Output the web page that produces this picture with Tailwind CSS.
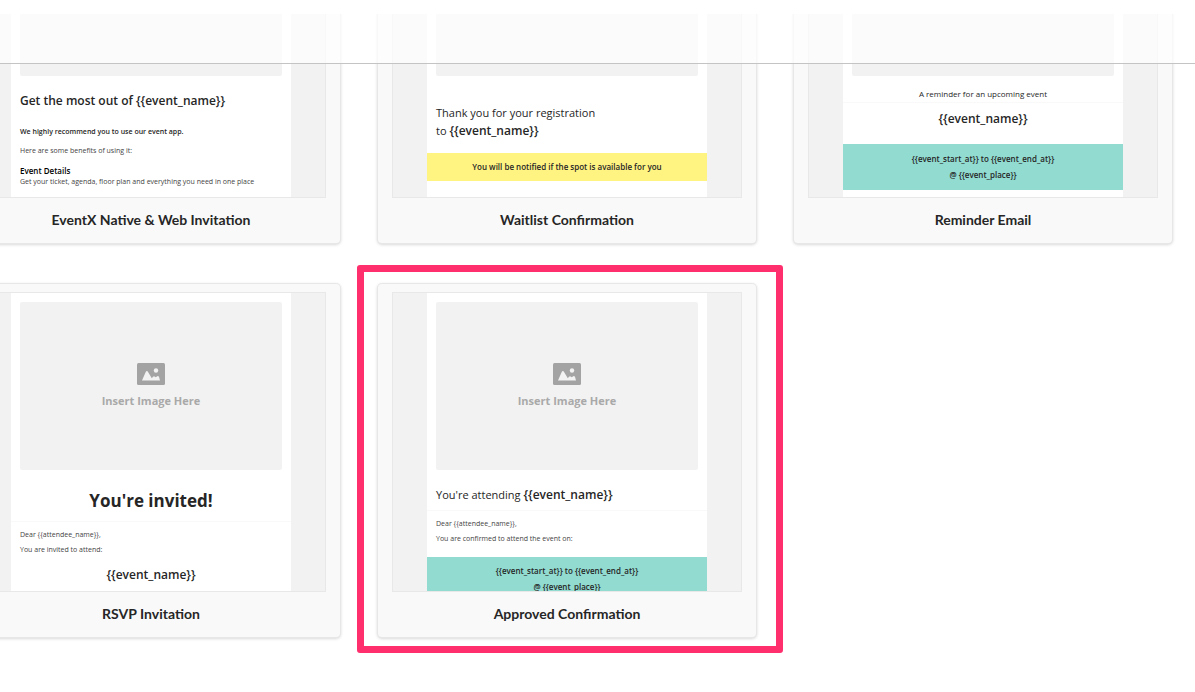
<!DOCTYPE html>
<html lang="en">
<head>
<meta charset="utf-8">
<title>Email templates</title>
<script src="https://cdn.jsdelivr.net/npm/@tailwindcss/browser@4"></script>
</head>
<body class="relative h-screen overflow-hidden bg-white font-['Open_Sans','Noto_Sans',sans-serif] text-[#262626]">
<svg class="hidden" aria-hidden="true">
  <symbol id="picture" viewBox="0 0 28 22">
    <rect width="28" height="22" rx="1.5" fill="#a3a3a3"/>
    <path d="M5 17.5L8.6 9.2Q9.8 6.8 11.2 9.2L14.8 15.3L16 13.7Q17 12.7 18 13.7L18.8 14.3L20.2 13.2Q21.2 12.6 22 13.8L23 17.5Z" fill="#f2f2f2"/>
    <circle cx="19" cy="7.5" r="2.2" fill="#f2f2f2"/>
  </symbol>
</svg>

<header class="absolute inset-x-0 top-0 z-10 border-b border-[#c4c4c4] bg-white/70">
  <div class="h-[14px] bg-white"></div>
  <div class="h-[49px]"></div>
</header>

<main class="-mt-[111px] -ml-[39px] grid grid-cols-3 gap-x-9 gap-y-[39px] pr-[22px]">

  <article class="rounded-[5px] bg-[#f9f9f9] px-[15px] pt-[9px] pb-3 shadow-[0_1px_3px_rgba(0,0,0,0.15),inset_0_0_0_1px_rgba(0,0,0,0.07)]">
    <div class="h-[300px] overflow-hidden border border-[#e8e8e8] bg-[#f2f2f2] px-[34px]">
      <div class="h-full bg-white px-[9px] pt-[9px] text-[7px] leading-[15px]">
        <div class="h-[168px] rounded-[2px] bg-[#f2f2f2]"></div>
        <h2 class="mt-4 text-[12px] leading-[18px] font-semibold">Get the most out of {{event_name}}</h2>
        <p class="mt-[14px] font-semibold">We highly recommend you to use our event app.</p>
        <p class="mt-1 text-[#444]">Here are some benefits of using it:</p>
        <p class="mt-[7px] text-[8px] leading-3 font-semibold text-black">Event Details</p>
        <p class="leading-[10px] text-[#444]">Get your ticket, agenda, floor plan and everything you need in one place</p>
      </div>
    </div>
    <h3 class="mt-[10px] text-center font-['Lato',sans-serif] text-[14px] leading-6 font-bold">EventX Native &amp; Web Invitation</h3>
  </article>

  <article class="rounded-[5px] bg-[#f9f9f9] px-[15px] pt-[9px] pb-3 shadow-[0_1px_3px_rgba(0,0,0,0.15),inset_0_0_0_1px_rgba(0,0,0,0.07)]">
    <div class="h-[300px] overflow-hidden border border-[#e8e8e8] bg-[#f2f2f2] px-[34px]">
      <div class="h-full bg-white px-[9px] pt-[9px]">
        <div class="h-[168px] rounded-[2px] bg-[#f2f2f2]"></div>
        <h2 class="mt-7 text-[11px] leading-[18px]">Thank you for your registration<br>to <b class="text-[12px] font-semibold">{{event_name}}</b></h2>
        <p class="-mx-[9px] mt-[13px] bg-[#fff382] py-[6px] text-center text-[8px] leading-4 font-semibold">You will be notified if the spot is available for you</p>
      </div>
    </div>
    <h3 class="mt-[10px] text-center font-['Lato',sans-serif] text-[14px] leading-6 font-bold">Waitlist Confirmation</h3>
  </article>

  <article class="rounded-[5px] bg-[#f9f9f9] px-[15px] pt-[9px] pb-3 shadow-[0_1px_3px_rgba(0,0,0,0.15),inset_0_0_0_1px_rgba(0,0,0,0.07)]">
    <div class="h-[300px] overflow-hidden border border-[#e8e8e8] bg-[#f2f2f2] px-[34px]">
      <div class="h-full bg-white px-[9px] pt-[9px] text-center">
        <div class="h-[168px] rounded-[2px] bg-[#f2f2f2]"></div>
        <p class="-mx-[9px] mt-[10px] border-b border-[#f9f9f9] text-[8px] leading-4">A reminder for an upcoming event</p>
        <h2 class="mt-[7px] text-[12px] leading-[18px] font-semibold">{{event_name}}</h2>
        <p class="-mx-[9px] mt-4 bg-[#91dbd0] py-[7px] text-[8px] leading-4 font-semibold">{{event_start_at}} to {{event_end_at}}<br>@ {{event_place}}</p>
      </div>
    </div>
    <h3 class="mt-[10px] text-center font-['Lato',sans-serif] text-[14px] leading-6 font-bold">Reminder Email</h3>
  </article>

  <article class="rounded-[5px] bg-[#f9f9f9] px-[15px] pt-[9px] pb-3 shadow-[0_1px_3px_rgba(0,0,0,0.15),inset_0_0_0_1px_rgba(0,0,0,0.07)]">
    <div class="h-[300px] overflow-hidden border border-[#e8e8e8] bg-[#f2f2f2] px-[34px]">
      <div class="h-full bg-white px-[9px] pt-[9px] text-[7px] leading-[15px]">
        <div class="flex h-[168px] flex-col items-center rounded-[2px] bg-[#f2f2f2] pt-[61px]">
          <svg class="h-[22px] w-7" aria-hidden="true"><use href="#picture"/></svg>
          <span class="mt-2 text-[11px] leading-4 font-bold text-[#a9a9a9]">Insert Image Here</span>
        </div>
        <h2 class="-mx-[9px] mt-[18px] border-b border-[#f9f9f9] pb-[7px] text-center text-[17px] leading-[26px] font-bold">You're invited!</h2>
        <p class="mt-[5px] text-[#444]">Dear {{attendee_name}},<br>You are invited to attend:</p>
        <p class="mt-[9px] text-center text-[12px] leading-[18px] font-semibold">{{event_name}}</p>
      </div>
    </div>
    <h3 class="mt-[10px] text-center font-['Lato',sans-serif] text-[14px] leading-6 font-bold">RSVP Invitation</h3>
  </article>

  <article class="relative rounded-[5px] bg-[#f9f9f9] px-[15px] pt-[9px] pb-3 shadow-[0_1px_3px_rgba(0,0,0,0.15),inset_0_0_0_1px_rgba(0,0,0,0.07)]">
    <div class="pointer-events-none absolute -top-[18px] -right-[26px] -bottom-[15px] -left-[20px] rounded-[3px] border-[7px] border-[#ff2e6d]"></div>
    <div class="h-[300px] overflow-hidden border border-[#e8e8e8] bg-[#f2f2f2] px-[34px]">
      <div class="h-full bg-white px-[9px] pt-[9px] text-[7px] leading-[15px]">
        <div class="flex h-[168px] flex-col items-center rounded-[2px] bg-[#f2f2f2] pt-[61px]">
          <svg class="h-[22px] w-7" aria-hidden="true"><use href="#picture"/></svg>
          <span class="mt-2 text-[11px] leading-4 font-bold text-[#a9a9a9]">Insert Image Here</span>
        </div>
        <h2 class="-mx-[9px] mt-4 border-b border-[#f9f9f9] px-[9px] pb-[6px] text-[11px] leading-[18px]">You're attending <b class="text-[12px] font-semibold">{{event_name}}</b></h2>
        <p class="mt-[5px] text-[#444]">Dear {{attendee_name}},<br>You are confirmed to attend the event on:</p>
        <p class="-mx-[9px] mt-[11px] bg-[#91dbd0] py-[6px] text-center text-[8px] leading-4 font-semibold">{{event_start_at}} to {{event_end_at}}<br>@ {{event_place}}</p>
      </div>
    </div>
    <h3 class="mt-[10px] text-center font-['Lato',sans-serif] text-[14px] leading-6 font-bold">Approved Confirmation</h3>
  </article>

</main>
</body>
</html>
